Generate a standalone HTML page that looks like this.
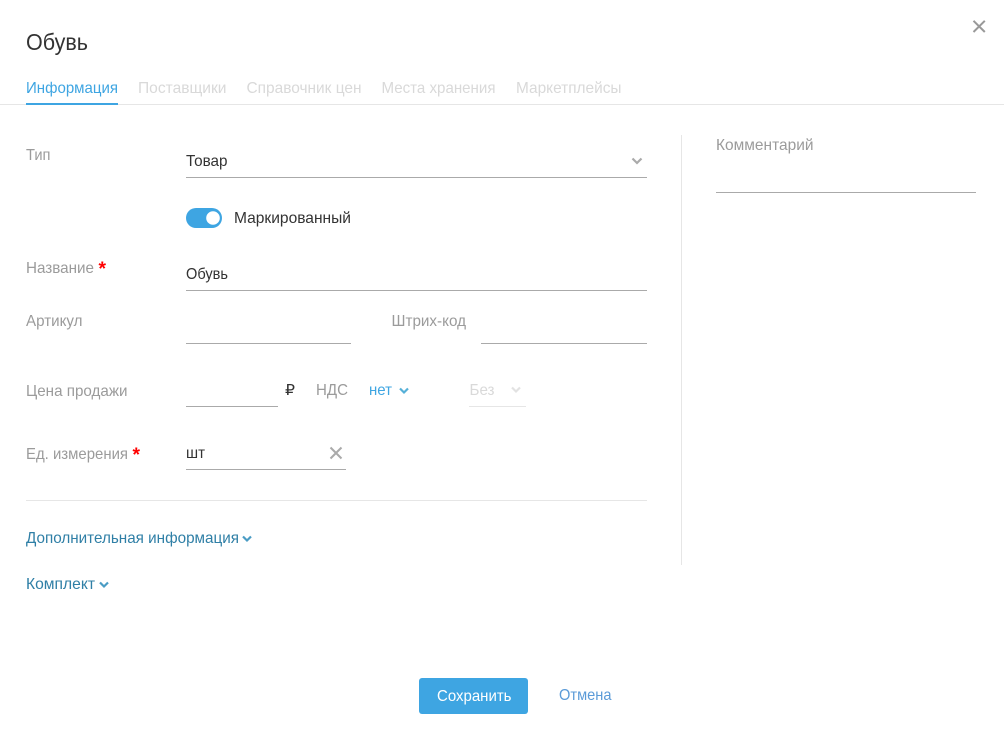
<!DOCTYPE html>
<html lang="ru"><head><meta charset="utf-8"><title>Обувь</title>
<style>
html,body{margin:0;padding:0;background:#fff;width:1004px;height:742px;overflow:hidden}
svg{display:block}
text{font-family:"Liberation Sans",sans-serif;font-size:16px}
.l{fill:#9b9b9b}.d{fill:#333}.t{fill:#d9d9d9}
</style></head><body>
<svg width="1004" height="742" viewBox="0 0 1004 742" xmlns="http://www.w3.org/2000/svg">
<rect width="1004" height="742" fill="#fff"/>
<path d="M973.500 20.800L984.800 32M984.800 20.800L973.500 32" stroke="#999" stroke-width="2" fill="none"/>
<text x="26" y="50" style="font-size:23.500px" fill="#333" textLength="62" lengthAdjust="spacingAndGlyphs">Обувь</text>

<rect x="0" y="104" width="1004" height="1" fill="#e6e6e6"/>
<rect x="26" y="103" width="92" height="2" fill="#3ea5e2"/>
<text x="26" y="93" fill="#3ea5e2" textLength="92" lengthAdjust="spacingAndGlyphs">Информация</text>
<text x="138" y="93" class="t" textLength="88.500" lengthAdjust="spacingAndGlyphs">Поставщики</text>
<text x="246.500" y="93" class="t" textLength="115" lengthAdjust="spacingAndGlyphs">Справочник цен</text>
<text x="381.500" y="93" class="t" textLength="114" lengthAdjust="spacingAndGlyphs">Места хранения</text>
<text x="516" y="93" class="t" textLength="105.500" lengthAdjust="spacingAndGlyphs">Маркетплейсы</text>

<text x="26" y="160" class="l" textLength="24.500" lengthAdjust="spacingAndGlyphs">Тип</text>
<text x="186" y="166" class="d" textLength="41.500" lengthAdjust="spacingAndGlyphs">Товар</text>
<rect x="186" y="177" width="461" height="1" fill="#aaa"/>
<path d="M632.500 158.500L637 163L641.500 158.500" stroke="#aaa" stroke-width="2.200" fill="none"/>

<rect x="186" y="208" width="36" height="20" rx="10" fill="#3ea5e2"/>
<circle cx="213" cy="218" r="6.800" fill="#fff"/>
<text x="234" y="223" class="d" textLength="117" lengthAdjust="spacingAndGlyphs">Маркированный</text>

<text x="26" y="273" class="l" textLength="68" lengthAdjust="spacingAndGlyphs">Название</text>
<text x="98.500" y="275" style="font-size:19px;font-weight:bold" fill="#f00" textLength="7.500" lengthAdjust="spacingAndGlyphs">*</text>
<text x="186" y="279" class="d" textLength="42" lengthAdjust="spacingAndGlyphs">Обувь</text>
<rect x="186" y="290" width="461" height="1" fill="#aaa"/>

<text x="26" y="326" class="l" textLength="56.500" lengthAdjust="spacingAndGlyphs">Артикул</text>
<rect x="186" y="343" width="165" height="1" fill="#aaa"/>
<text x="391.500" y="326" class="l" textLength="74.500" lengthAdjust="spacingAndGlyphs">Штрих-код</text>
<rect x="481" y="343" width="166" height="1" fill="#aaa"/>

<text x="26" y="396" class="l" textLength="101.500" lengthAdjust="spacingAndGlyphs">Цена продажи</text>
<rect x="186" y="406" width="92" height="1" fill="#aaa"/>
<text x="285" y="395" class="d" style="font-family:'DejaVu Sans',sans-serif;font-size:15px" textLength="10" lengthAdjust="spacingAndGlyphs">₽</text>
<text x="316" y="395" class="l" textLength="32" lengthAdjust="spacingAndGlyphs">НДС</text>
<text x="369" y="395" fill="#3ea5e2" textLength="23" lengthAdjust="spacingAndGlyphs">нет</text>
<path d="M400 388.500L404 392.500L408 388.500" stroke="#55b0d8" stroke-width="2.200" fill="none"/>
<text x="469.500" y="395" class="t" textLength="25" lengthAdjust="spacingAndGlyphs">Без</text>
<path d="M512 387.500L516 391.500L520 387.500" stroke="#e2e2e2" stroke-width="2.200" fill="none"/>
<rect x="469" y="406" width="57" height="1" fill="#e6e6e6"/>

<text x="26" y="459" class="l" textLength="102" lengthAdjust="spacingAndGlyphs">Ед. измерения</text>
<text x="132.500" y="461" style="font-size:19px;font-weight:bold" fill="#f00" textLength="7.500" lengthAdjust="spacingAndGlyphs">*</text>
<text x="186" y="458" class="d" textLength="19" lengthAdjust="spacingAndGlyphs">шт</text>
<path d="M330.500 447.500L341.500 458.500M341.500 447.500L330.500 458.500" stroke="#aaa" stroke-width="2" fill="none"/>
<rect x="186" y="469" width="160" height="1" fill="#aaa"/>

<rect x="26" y="500" width="621" height="1" fill="#e6e6e6"/>
<rect x="681" y="135" width="1" height="430" fill="#e6e6e6"/>

<text x="26" y="543" fill="#2f7fa6" textLength="213" lengthAdjust="spacingAndGlyphs">Дополнительная информация</text>
<path d="M243 536.500L247 540.500L251 536.500" stroke="#4a9cc4" stroke-width="2.200" fill="none"/>
<text x="26" y="589" fill="#2f7fa6" textLength="69" lengthAdjust="spacingAndGlyphs">Комплект</text>
<path d="M100 582.500L104 586.500L108 582.500" stroke="#4a9cc4" stroke-width="2.200" fill="none"/>

<text x="716" y="150" class="l" textLength="97.500" lengthAdjust="spacingAndGlyphs">Комментарий</text>
<rect x="716" y="192" width="260" height="1" fill="#aaa"/>

<rect x="419" y="678" width="109" height="36" rx="3" fill="#3ea5e2"/>
<text x="437" y="701" fill="#fff" textLength="74.500" lengthAdjust="spacingAndGlyphs">Сохранить</text>
<text x="559" y="700" fill="#5b9bd8" textLength="52.500" lengthAdjust="spacingAndGlyphs">Отмена</text>
</svg>
</body></html>
